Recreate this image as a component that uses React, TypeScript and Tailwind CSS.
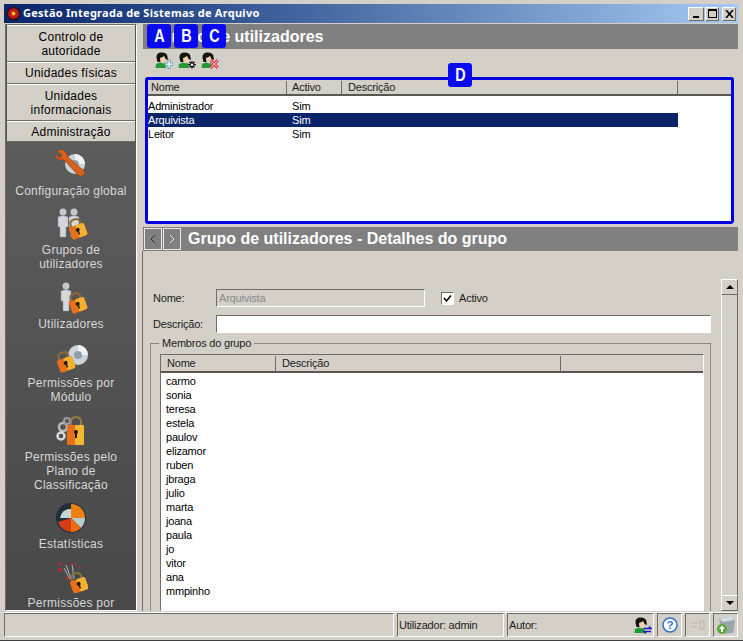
const sunken = "border border-t-[#6f6c66] border-l-[#6f6c66] border-r-white border-b-white";
const raised = "border border-t-white border-l-white border-r-[#6f6c66] border-b-[#6f6c66]";

const UserIcon = ({ badge }: { badge: "plus" | "gear" | "x" | "swap" }) => (
  <svg width="18" height="17" viewBox="0 0 18 17">
    <path d="M1.5 6 Q1 0.5 6.5 0.5 Q12.5 0.5 12.5 5 L13 8 L10.5 7 L9 4.5 Q6 6 5.5 6 L5.5 10 L2.5 10 Z" fill="#141410" />
    <path d="M5 6 Q7.5 5.5 9 4 L10.5 7 L10 9.5 Q8 11 6.5 10 Q5 9 5 6Z" fill="#eed0ac" />
    <path d="M1 12 L5 10.5 L8 11.5 L10 11 L11 16 L0.5 16 Z" fill="#1f9a34" />
    {badge === "plus" && <path d="M13 8 h2.4 v3 h2.6 v2.4 h-2.6 v3 h-2.4 v-3 h-3 v-2.4 h3z" fill="#e4f6f6" stroke="#4f9aa4" strokeWidth="0.8" />}
    {badge === "gear" && (
      <g stroke="#000" strokeWidth="1.3">
        <path d="M14 9 v7.5 M10.2 12.7 h7.6 M11.5 10 l5 5.4 M16.5 10 l-5 5.4" />
        <circle cx="14" cy="12.7" r="1.3" fill="#fff" stroke="none" />
      </g>
    )}
    {badge === "x" && <path d="M9.5 8 L17 16 M17 8 L9.5 16" stroke="#d8203c" strokeWidth="2.8" />}
    {badge === "x" && <path d="M9.5 8 L17 16 M17 8 L9.5 16" stroke="#fbe6e6" strokeWidth="1" />}
    {badge === "swap" && <path d="M10 11.5 h7 l-2 -2 M17 14.5 h-7 l2 2" stroke="#1a1ac0" strokeWidth="1.4" fill="none" />}
  </svg>
);

const Padlock = ({ x, y }: { x: number; y: number }) => (
  <g transform={`translate(${x} ${y}) rotate(-20 9 9)`}>
    <path d="M4 7 V4 Q4 0 9 0 Q14 0 14 4 V7" fill="none" stroke="#8c6a3c" strokeWidth="2" />
    <rect x="1" y="6" width="16" height="13" rx="2" fill="#e8701c" />
    <rect x="8" y="6" width="9" height="13" rx="2" fill="#f4b030" />
    <circle cx="9" cy="11" r="2" fill="#2a1c10" />
    <rect x="8.2" y="11" width="1.6" height="5" fill="#2a1c10" />
  </g>
);

const Person = ({ x }: { x: number }) => (
  <g transform={`translate(${x} 0)`}>
    <circle cx="6" cy="4" r="3.5" fill="#c4c8cc" />
    <path d="M1 9 Q6 6 11 9 L11 19 L9 19 L9 29 L3 29 L3 19 L1 19Z" fill="#d4d8dc" stroke="#8a8e92" strokeWidth="0.5" />
  </g>
);

const Disc = ({ x, y }: { x: number; y: number }) => (
  <g transform={`translate(${x} ${y})`}>
    <circle cx="10" cy="10" r="10" fill="#c8d4d8" />
    <circle cx="10" cy="10" r="4" fill="#8ea0a8" />
    <path d="M10 0 A10 10 0 0 1 20 10 L14 10 A4 4 0 0 0 10 6Z" fill="#eef2f4" />
  </g>
);

const SideIcon = ({ kind }: { kind: number }) => {
  if (kind === 0)
    return (
      <svg width="34" height="32" viewBox="0 0 34 32">
        <Disc x={11} y={5} />
        <path d="M3 2 L8 6 L6 9 L1 5 Q1 10 6 11 L10 11 L24 26 Q27 29 30 26 Q32 23 29 21 L14 8 Q13 3 9 1 Q6 0 3 2Z" fill="#d8601c" stroke="#8a3a10" strokeWidth="0.6" />
      </svg>
    );
  if (kind === 1)
    return (
      <svg width="34" height="32" viewBox="0 0 34 32">
        <Person x={3} />
        <Person x={14} />
        <Padlock x={14} y={11} />
      </svg>
    );
  if (kind === 2)
    return (
      <svg width="34" height="32" viewBox="0 0 34 32">
        <Person x={6} />
        <Padlock x={14} y={11} />
      </svg>
    );
  if (kind === 3)
    return (
      <svg width="34" height="32" viewBox="0 0 34 32">
        <Disc x={14} y={4} />
        <Padlock x={2} y={11} />
      </svg>
    );
  if (kind === 4)
    return (
      <svg width="34" height="32" viewBox="0 0 34 32">
        <circle cx="9" cy="12" r="4" fill="none" stroke="#b8bcc0" strokeWidth="2.5" />
        <circle cx="7" cy="21" r="3.5" fill="none" stroke="#d4d8dc" strokeWidth="2.5" />
        <circle cx="13" cy="6" r="3" fill="none" stroke="#9ca0a4" strokeWidth="2" />
        <path d="M17 11 V7 Q17 2 22 2 Q27 2 27 7 V11" fill="none" stroke="#9a7a48" strokeWidth="2" />
        <rect x="13" y="10" width="10" height="20" fill="#e8701c" rx="1" />
        <rect x="21" y="10" width="9" height="20" fill="#f4b830" rx="1" />
        <circle cx="22" cy="17" r="2" fill="#20140c" />
        <rect x="21" y="17" width="2" height="6" fill="#20140c" />
      </svg>
    );
  if (kind === 5)
    return (
      <svg width="34" height="32" viewBox="0 0 34 32">
        <circle cx="17" cy="16" r="15" fill="#1c3038" />
        <path d="M17 2 A14 14 0 0 1 31 16 L17 16Z" fill="#f08010" />
        <path d="M17 16 L31 16 A14 14 0 0 1 27 26Z" fill="#b8ccd0" />
        <path d="M17 16 L27 26 A14 14 0 0 1 17 30Z" fill="#f06c10" />
        <path d="M17 30 A14 14 0 0 1 4 20 L17 16Z" fill="#d83c14" />
        <path d="M6 16 L17 16 L17 7 A10 10 0 0 0 6 16Z" fill="#c8d4d8" />
      </svg>
    );
  return (
    <svg width="34" height="32" viewBox="0 0 34 32">
      <path d="M18 20 L12 4 M20 18 L18 3 M10 7 L16 18" stroke="#c8ccd0" strokeWidth="0.8" />
      <circle cx="6" cy="9" r="2" fill="#b82838" />
      <circle cx="18" cy="3" r="1.5" fill="#b82838" />
      <circle cx="13" cy="17" r="1.5" fill="#b82838" />
      <path d="M4 4 l4 -2 M24 5 l3 2" stroke="#b82838" strokeWidth="1.5" />
      <Padlock x={15} y={12} />
    </svg>
  );
};

const sideButtons = [
  { label: "Controlo de autoridade", h: "h-[37px]", w: "w-[90px]" },
  { label: "Unidades físicas", h: "h-[22px]", w: "" },
  { label: "Unidades informacionais", h: "h-[37px]", w: "w-[90px]" },
  { label: "Administração", h: "h-[21px]", w: "" },
];

const sideItems = [
  { kind: 0, lines: ["Configuração global"], mt: "mt-[7px]" },
  { kind: 1, lines: ["Grupos de", "utilizadores"], mt: "mt-[10px]" },
  { kind: 2, lines: ["Utilizadores"], mt: "mt-[11px]" },
  { kind: 3, lines: ["Permissões por", "Módulo"], mt: "mt-[10px]" },
  { kind: 4, lines: ["Permissões pelo", "Plano de", "Classificação"], mt: "mt-[11px]" },
  { kind: 5, lines: ["Estatísticas"], mt: "mt-[10px]" },
  { kind: 6, lines: ["Permissões por"], mt: "mt-[10px]" },
];

const Sidebar = () => (
  <div className={`w-[132px] shrink-0 flex flex-col overflow-hidden bg-[#555555] ${sunken}`}>
    {sideButtons.map((b) => (
      <div
        key={b.label}
        className={`${b.h} shrink-0 flex items-center justify-center text-center text-[12px] leading-[14px] tracking-[0.25px] text-black bg-[#d4d0c8] border-b border-[#6f6c66] border-t-white border-t mx-[1px]`}
      >
        <span className={b.w}>{b.label}</span>
      </div>
    ))}
    <div className="flex-1 flex flex-col items-center overflow-hidden bg-gradient-to-b from-[#5c5c5c] to-[#484848]">
      {sideItems.map((item) => (
        <div key={item.kind} className={`${item.mt} shrink-0 flex flex-col items-center gap-[3px]`}>
          <SideIcon kind={item.kind} />
          <div className="text-center text-[12px] leading-[14px] tracking-[0.25px] text-[#d8d8d8] whitespace-nowrap">
            {item.lines.map((l) => (
              <div key={l}>{l}</div>
            ))}
          </div>
        </div>
      ))}
    </div>
  </div>
);

const HeaderCell = ({ label, w, pl }: { label: string; w: string; pl: string }) => (
  <div className={`${w} ${pl} h-full flex items-center border-r border-r-[#6f6c66] text-[11px] text-[#1c1c1c]`}>
    {label}
  </div>
);

const groups = [
  { nome: "Administrador", activo: "Sim", selected: false },
  { nome: "Arquivista", activo: "Sim", selected: true },
  { nome: "Leitor", activo: "Sim", selected: false },
];

const members = [
  "carmo", "sonia", "teresa", "estela", "paulov", "elizamor", "ruben", "jbraga",
  "julio", "marta", "joana", "paula", "jo", "vitor", "ana", "mmpinho",
];

const GroupsTable = () => (
  <div className="relative h-[146px] mx-[4px] flex flex-col overflow-hidden bg-white">
    <div className="h-[18px] shrink-0 flex bg-[#d4d0c8] border-b-2 border-b-[#5a5852] pl-[1px] pt-[3px]">
      <HeaderCell label="Nome" w="w-[139px]" pl="pl-[3px]" />
      <HeaderCell label="Activo" w="w-[55px]" pl="pl-[5px]" />
      <HeaderCell label="Descrição" w="w-[336px]" pl="pl-[6px]" />
    </div>
    <div className="pt-[3px]">
      {groups.map((g) => (
        <div
          key={g.nome}
          className={`w-[531px] h-[14px] pl-[1px] flex items-center text-[11px] ${g.selected ? "bg-[#0a246a] text-white" : "text-black"}`}
        >
          <span className="w-[144px]">{g.nome}</span>
          <span>{g.activo}</span>
        </div>
      ))}
    </div>
  </div>
);

const ScrollBar = () => (
  <div className="w-[17px] shrink-0 flex flex-col mt-[28px]">
    <div className={`h-[16px] shrink-0 flex items-center justify-center bg-[#d4d0c8] ${raised}`}>
      <div className="w-0 h-0 border-x-[4px] border-x-transparent border-b-[4px] border-b-black" />
    </div>
    <div className="flex-1 bg-[#d4d0c8] border-l border-l-white border-r border-r-[#6f6c66]" />
    <div className={`h-[16px] shrink-0 flex items-center justify-center bg-[#d4d0c8] ${raised}`}>
      <div className="w-0 h-0 border-x-[4px] border-x-transparent border-t-[4px] border-t-black" />
    </div>
  </div>
);

const Details = () => (
  <div className="flex-1 -ml-px flex min-h-0 overflow-hidden border-l border-l-[#6f6c66]">
    <div className="flex-1 min-w-0 flex flex-col pl-[7px] pr-[10px] pt-[38px] overflow-hidden">
      <div className="h-[18px] shrink-0 flex items-center text-[11px] text-[#1c1c1c]">
        <span className="w-[66px] pl-[3px]">Nome:</span>
        <div className={`w-[209px] h-[18px] flex items-center pl-[2px] text-[#8a8a8a] ${sunken}`}>Arquivista</div>
        <div className={`ml-[16px] w-[13px] h-[13px] flex items-center justify-center bg-white ${sunken}`}>
          <svg width="9" height="9" viewBox="0 0 9 9">
            <path d="M1 4 L3.5 7 L8 1.5" stroke="#000" strokeWidth="1.6" fill="none" />
          </svg>
        </div>
        <span className="ml-[5px]">Activo</span>
      </div>
      <div className="h-[18px] mt-[8px] shrink-0 flex items-center text-[11px] text-[#1c1c1c]">
        <span className="w-[66px] pl-[3px]">Descrição:</span>
        <div className={`w-[496px] h-[18px] bg-white ${sunken}`} />
      </div>
      <div className="relative mt-[10px] flex-1 border border-b-0 border-[#8a8780] pt-[10px] pl-[9px] pr-[6px] min-h-0 flex flex-col">
        <span className="absolute -top-[7px] left-[8px] px-[3px] bg-[#d4d0c8] text-[11px] leading-[13px] text-[#1c1c1c]">
          Membros do grupo
        </span>
        <div className={`flex-1 min-h-0 flex flex-col bg-white ${sunken}`}>
          <div className="h-[18px] shrink-0 flex bg-[#d4d0c8] border-b-2 border-b-[#5a5852] pt-px">
            <HeaderCell label="Nome" w="w-[115px]" pl="pl-[6px]" />
            <HeaderCell label="Descrição" w="w-[285px]" pl="pl-[6px]" />
          </div>
          <div className="pt-px pl-[5px] text-[11px] leading-[14px] text-black">
            {members.map((m) => (
              <div key={m} className="h-[14px]">{m}</div>
            ))}
          </div>
        </div>
      </div>
    </div>
    <ScrollBar />
  </div>
);

const Main = () => (
  <div className="flex-1 min-w-0 flex flex-col ml-[6px]">
    <div className="h-[25px] shrink-0 flex items-center pl-[16px] bg-[#808080] text-white font-bold text-[16px] tracking-[0px] whitespace-nowrap">
      Grupo de utilizadores
    </div>
    <div className="h-[29px] shrink-0 flex items-start gap-[5px] pl-[12px] pt-[3px]">
      <UserIcon badge="plus" />
      <UserIcon badge="gear" />
      <UserIcon badge="x" />
    </div>
    <GroupsTable />
    <div className="h-[3px] shrink-0" />
    <div className="h-[24px] shrink-0 flex items-center bg-[#808080] pl-[1px] text-white font-bold text-[16px] tracking-[0px] whitespace-nowrap">
      <div className="w-[18px] h-[22px] flex items-center justify-center border border-[#e8e8e8]">
        <svg width="6" height="10" viewBox="0 0 6 10">
          <path d="M5 1 L1 5 L5 9" stroke="#303030" fill="none" />
        </svg>
      </div>
      <div className="w-[18px] h-[22px] ml-[1px] flex items-center justify-center border border-[#e8e8e8]">
        <svg width="6" height="10" viewBox="0 0 6 10">
          <path d="M1 1 L5 5 L1 9" stroke="#e8e8e8" fill="none" />
        </svg>
      </div>
      <span className="ml-[7px]">Grupo de utilizadores - Detalhes do grupo</span>
    </div>
    <Details />
  </div>
);

const StatusBar = () => (
  <div className="h-[25px] shrink-0 mt-[1px] flex gap-[3px] text-[11px] text-[#1c1c1c] border-t border-t-white">
    <div className={`w-[390px] ${sunken}`} />
    <div className={`w-[107px] flex items-center pl-px ${sunken}`}>Utilizador: admin</div>
    <div className={`w-[147px] flex items-center justify-between pl-[1px] pr-[1px] ${sunken}`}>
      <span>Autor:</span>
      <UserIcon badge="swap" />
    </div>
    <div className={`w-[25px] flex items-center justify-center ${sunken}`}>
      <svg width="16" height="16" viewBox="0 0 16 16">
        <circle cx="8" cy="8" r="7" fill="#fff" stroke="#2f6fc8" strokeWidth="1.5" />
        <text x="8" y="12" textAnchor="middle" fontSize="11" fontWeight="bold" fill="#2f6fc8" fontFamily="Liberation Sans">?</text>
      </svg>
    </div>
    <div className={`w-[25px] flex items-center justify-center ${sunken}`}>
      <svg width="16" height="10" viewBox="0 0 16 10">
        <path d="M1 3 h6 M7 7 h-6 M10 1 h4 v8 h-4z" stroke="#b8b4ac" fill="none" />
      </svg>
    </div>
    <div className={`w-[25px] flex items-center justify-center ${sunken}`}>
      <svg width="20" height="20" viewBox="0 0 20 20">
        <path d="M3 4 L15 1 L19 5 L17 18 L6 19 Z" fill="#9aa4ac" />
        <path d="M3 4 L15 1 L19 5 L7 7 Z" fill="#d4dce0" />
        <circle cx="6" cy="14" r="5" fill="#58a838" />
        <path d="M6 10.5 L9 14 H7 V17 H5 V14 H3Z" fill="#fff" />
      </svg>
    </div>
  </div>
);

const badgeClass =
  "absolute w-[24px] h-[24px] flex items-center justify-center rounded-[3px] bg-[#0a0af0] text-white font-bold text-[18px]";

const Badge = ({ pos, letter }: { pos: string; letter: string }) => (
  <div className={`${badgeClass} ${pos}`}>
    <span className="inline-block scale-x-[0.8]">{letter}</span>
  </div>
);

export default function App() {
  return (
    <div className="relative w-[743px] h-[641px] overflow-hidden flex flex-col bg-[#d4d0c8] pt-[4px] pb-[3px] pl-[4px] pr-[5px] tracking-[-0.2px] font-['Liberation_Sans',Arial,sans-serif] border-b border-b-[#404040]">
      <div className="h-[19px] shrink-0 flex items-center bg-gradient-to-r from-[#0a246a] to-[#a6caf0] pl-[2px] pr-[2px] text-white">
        <svg width="15" height="15" viewBox="0 0 14 14" className="shrink-0">
          <circle cx="7" cy="7" r="6.5" fill="#2a1018" />
          <circle cx="7" cy="7" r="5" fill="#c01818" />
          <circle cx="7" cy="7" r="1.8" fill="#f0c020" />
        </svg>
        <span className="ml-[2px] font-bold text-[11px] tracking-[0.27px] font-['Noto_Sans',sans-serif]">
          Gestão Integrada de Sistemas de Arquivo
        </span>
        <div className="ml-auto flex">
          <div className={`w-[16px] h-[14px] flex items-end justify-center pb-[2px] bg-[#d4d0c8] ${raised}`}>
            <div className="w-[6px] h-[2px] bg-black" />
          </div>
          <div className={`w-[14px] h-[14px] ml-px flex items-center justify-center bg-[#d4d0c8] ${raised}`}>
            <div className="w-[9px] h-[9px] border border-black border-t-2" />
          </div>
          <div className={`w-[14px] h-[14px] ml-[3px] flex items-center justify-center bg-[#d4d0c8] ${raised}`}>
            <svg width="9" height="8" viewBox="0 0 9 8">
              <path d="M1 0 L8 8 M8 0 L1 8" stroke="#000" strokeWidth="1.6" />
            </svg>
          </div>
        </div>
      </div>
      <div className="flex-1 min-h-0 flex mt-[1px] ml-[1px]">
        <Sidebar />
        <Main />
      </div>
      <StatusBar />

      {/* annotation marks laid over the screenshot */}
      <Badge pos="left-[147px] top-[24px]" letter="A" />
      <Badge pos="left-[174px] top-[24px]" letter="B" />
      <Badge pos="left-[202px] top-[24px]" letter="C" />
      <div className="absolute left-[145px] top-[77px] w-[589px] h-[147px] rounded-[3px] border-[3px] border-[#0000e0] pointer-events-none" />
      <Badge pos="left-[448px] top-[63px]" letter="D" />
    </div>
  );
}
